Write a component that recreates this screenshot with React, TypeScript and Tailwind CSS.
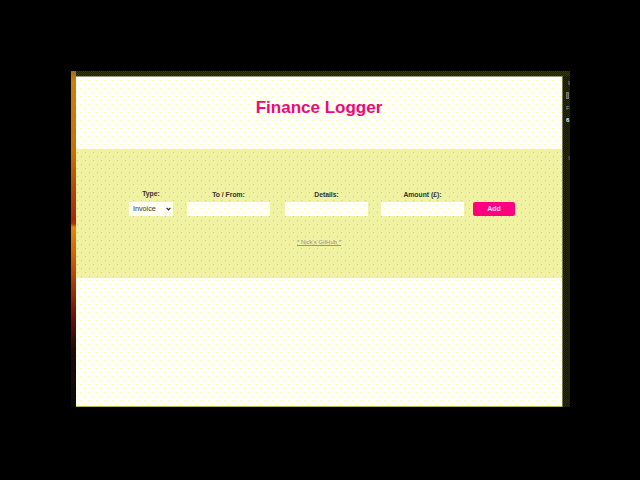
import React from "react";

type DotsProps = { id: string; x: number; y: number; panel?: boolean };

function Dots({ id, x, y, panel }: DotsProps) {
  return (
    <svg className="pointer-events-none absolute inset-0 h-full w-full" shapeRendering="crispEdges" aria-hidden="true">
      <defs>
        <pattern id={id} x={-(x % 8)} y={-(y % 8)} width="8" height="8" patternUnits="userSpaceOnUse">
          {panel ? (
            <>
              <rect width="8" height="8" fill="#e9e9ed" />
              {[0, 1, 2, 3, 4, 5, 6, 7].flatMap((row) =>
                [0, 2, 4, 6].map((col) => (
                  <rect key={col + "-" + row} x={col + (row % 2)} y={row} width="1" height="1" fill="#f1f1a2" />
                )),
              )}
              <path d="M5 0h1v1h-1zM1 4h1v1h-1z" fill="#c4c4ce" />
            </>
          ) : (
            <path d="M0 0h1v1h-1zM4 4h1v1h-1z" fill="#ffff94" />
          )}
        </pattern>
      </defs>
      <rect width="100%" height="100%" fill={`url(#${id})`} />
    </svg>
  );
}

function Field({ label, id, x }: { label: string; id: string; x: number }) {
  return (
    <div className="flex w-[83px] flex-col items-center">
      <label className="h-[13px] text-[6.8px] leading-[11px] font-bold whitespace-nowrap">{label}</label>
      <div className="relative h-[14px] w-full overflow-hidden rounded-[1px] bg-[#fefefe]">
        <Dots id={id} x={x} y={202} />
      </div>
    </div>
  );
}

export default function App() {
  return (
    <div className="h-[480px] w-[640px] overflow-hidden bg-black pt-[71px] pl-[71px] font-['Liberation_Sans',sans-serif] text-[#333333]">
      <div className="flex h-[336px] w-[499px]">
        <div className="w-[5px] bg-[linear-gradient(#a8680c,#cc8010_3%,#c87008_24%,#a82808_44%,#b83008_45.5%,#e08810_46.5%,#d06008_55%,#a03008_65%,#701008_73%,#200808_83%,#040c04)]" />
        <div className="flex flex-1 flex-col">
          <div className="h-[5px] shrink-0 bg-[conic-gradient(#3c3c10_25%,#1c1c20_0_50%,#34340c_0_75%,#1c1c20_0)] bg-size-[2px_2px]" />
          <div className="flex flex-1">
            <main className="flex w-[486px] flex-col bg-[#fefefe]">
              <header className="relative flex h-[73px] items-start justify-center border-t border-[#999980] pt-[20px]">
                <Dots id="top" x={76} y={77} />
                <h1 className="relative text-[17px] leading-[21px] font-bold text-[#f00878]">Finance Logger</h1>
              </header>
              <section className="relative h-[129px]">
                <Dots id="panel" x={76} y={149} panel />
                <form className="relative flex pt-[40px] pl-[53px]">
                  <div className="mr-[14px] flex w-[44px] flex-col items-center">
                    <label className="h-[13px] text-[6.8px] leading-[10px] font-bold">Type:</label>
                    <div className="relative flex h-[14px] w-full items-center justify-between rounded-[1px] bg-[#fefefe] pr-[2px] pl-[4px]">
                      <Dots id="select" x={129} y={202} />
                      <span className="relative text-[7.2px] leading-[14px]">Invoice</span>
                      <svg className="relative h-[4px] w-[5px]" viewBox="0 0 5 4">
                        <path d="M.6.8l1.9 2 1.9-2" fill="none" stroke="#222" strokeWidth="1.2" />
                      </svg>
                    </div>
                  </div>
                  <Field label="To / From:" id="from" x={187} />
                  <div className="w-[15px]" />
                  <Field label="Details:" id="details" x={285} />
                  <div className="w-[13px]" />
                  <Field label="Amount (£):" id="amount" x={381} />
                  <button type="button" className="mt-[13px] ml-[9px] h-[14px] w-[42px] rounded-[2px] bg-[#ff0080] text-[7px] leading-[14px] font-bold text-[#ffe4f2]">
                    Add
                  </button>
                </form>
                <p className="relative mt-[21px] text-center text-[6px] leading-[10px] text-[#92929c] underline">* Nick's GitHub *</p>
              </section>
              <div className="relative flex-1 border-b border-[#b8b84c]">
                <Dots id="bottom" x={76} y={278} />
              </div>
            </main>
            <aside className="flex w-[8px] flex-col items-end border-l border-[#77775e] bg-[conic-gradient(#2e2e14_25%,#141418_0_50%,#262610_0_75%,#141418_0)] bg-size-[2px_2px] pt-[5px] text-[6px] leading-[7px]">
              <span className="h-[4px] w-[2px] bg-[#4c4c40]" />
              <span className="mt-[7px] mr-px h-[7px] w-[3px] border border-[#77776c] bg-[#555550]" />
              <span className="mt-[6px] w-[4px] overflow-hidden text-[#999988]">F</span>
              <span className="mt-[5px] w-[4px] overflow-hidden font-bold text-[#eeeeee]">6</span>
              <span className="mt-[32px] h-[4px] w-[2px] bg-[#3c3c48]" />
            </aside>
          </div>
        </div>
      </div>
    </div>
  );
}
